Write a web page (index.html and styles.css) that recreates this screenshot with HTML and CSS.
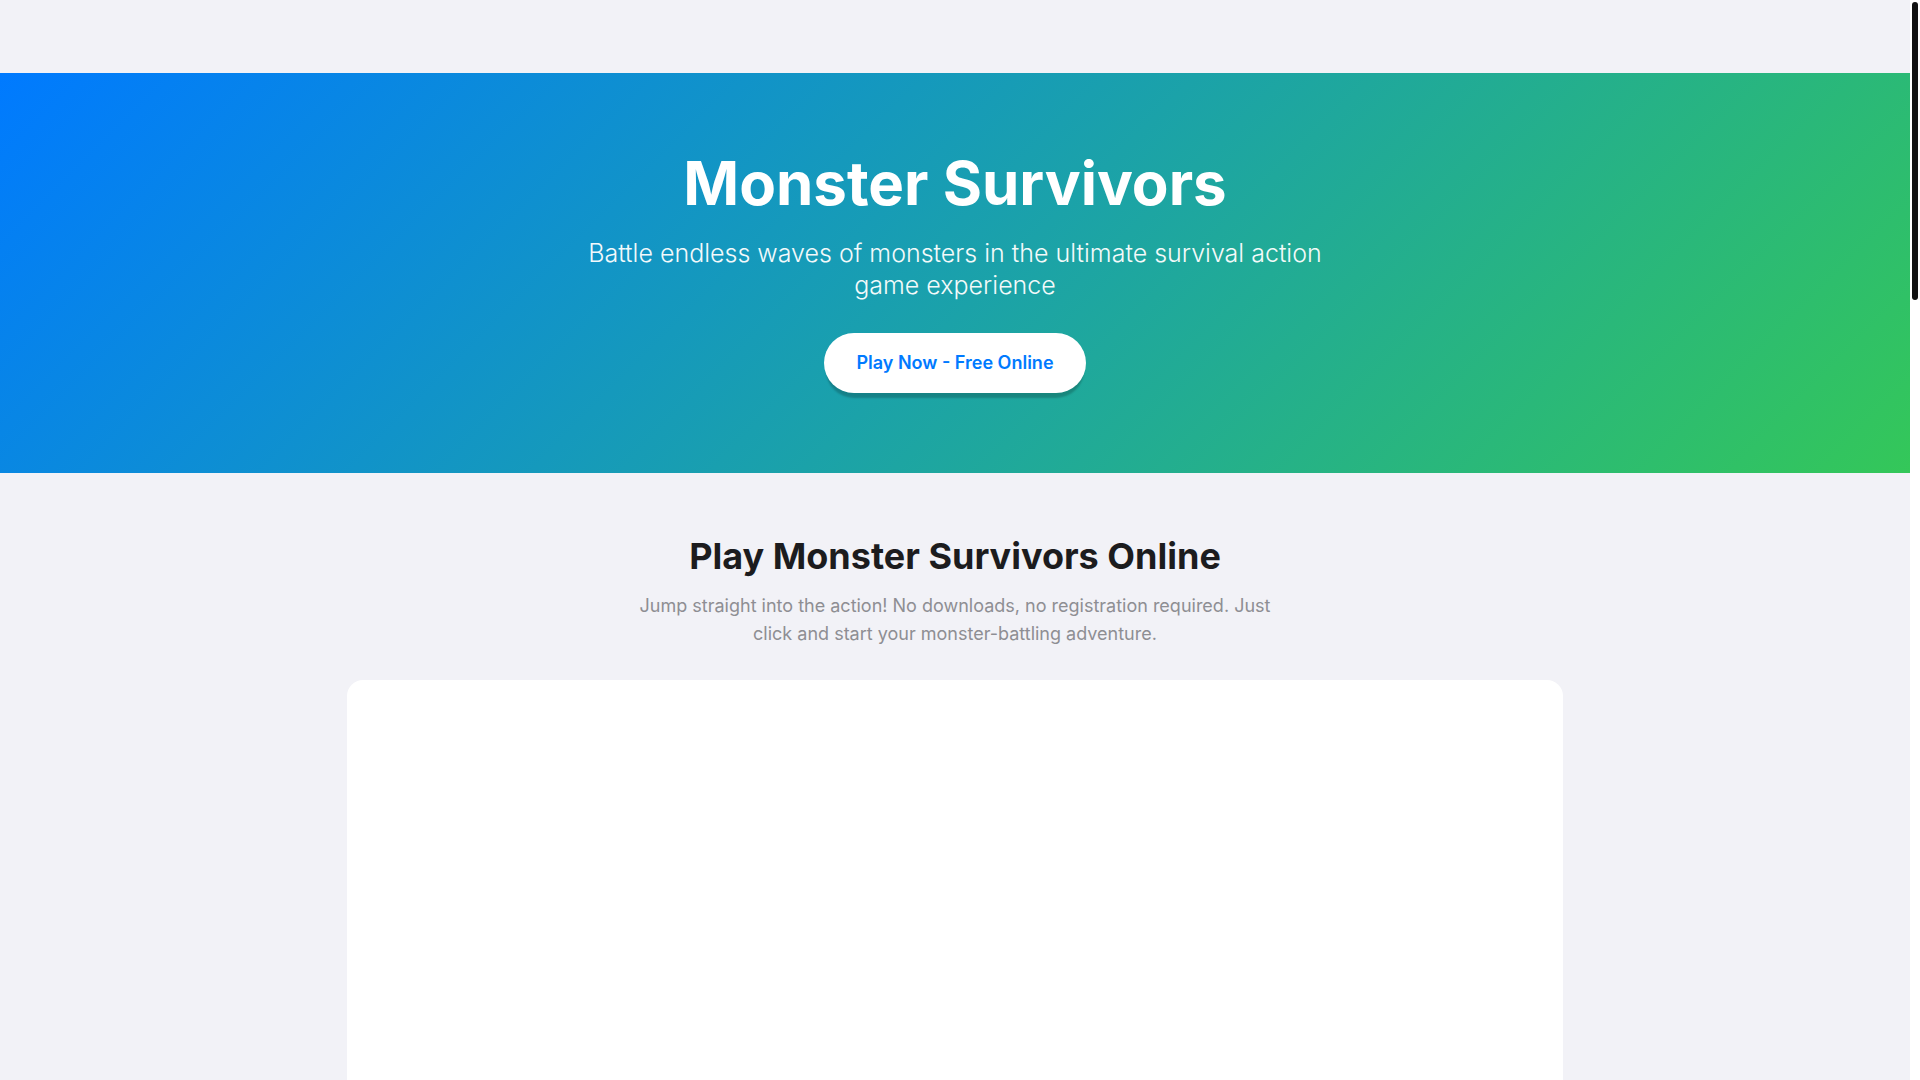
FILE: index.html
```html
<!DOCTYPE html>
<html lang="en">
<head>
<meta charset="utf-8">
<title>Monster Survivors - Play Free Online</title>
<link rel="stylesheet" href="styles.css">
</head>
<body>
<div class="frame">
  <div class="viewport">
    <header class="topbar"></header>
    <section class="hero">
      <h1 class="hero-title">Monster Survivors</h1>
      <p class="hero-sub">Battle endless waves of monsters in the ultimate survival action game experience</p>
      <a class="hero-btn" href="#play">Play Now - Free Online</a>
    </section>
    <main class="play" id="play">
      <h2 class="play-title">Play Monster Survivors Online</h2>
      <p class="play-sub">Jump straight into the action! No downloads, no registration required. Just click and start your monster-battling adventure.</p>
      <div class="game-card"></div>
    </main>
  </div>
  <div class="scrollbar"><div class="scroll-thumb"></div></div>
</div>
</body>
</html>
```

FILE: styles.css
```css
html, body {
  margin: 0;
  padding: 0;
  height: 100%;
  overflow: hidden;
}
body {
  background: #f2f2f7;
  font-family: Inter, "Noto Sans", "Liberation Sans", sans-serif;
  color: #1c1c1e;
}
.frame {
  display: flex;
  height: 100vh;
}
.viewport {
  flex: 1;
  min-width: 0;
  height: 100%;
  overflow: hidden;
  background: #f2f2f7;
}
.scrollbar {
  width: 10px;
  flex: 0 0 10px;
  background: #ffffff;
  display: flex;
  justify-content: flex-end;
  padding-right: 2px;
  box-sizing: border-box;
}
.scroll-thumb {
  width: 6px;
  height: 298px;
  margin-top: 2px;
  background: #111111;
  border-radius: 3px;
}
.topbar {
  height: 73px;
  background: #f2f2f7;
}
.hero {
  background: linear-gradient(135deg, #007aff 0%, #34c759 100%);
  padding: 74px 20px 80px;
  display: flex;
  flex-direction: column;
  align-items: center;
  text-align: center;
  color: #ffffff;
}
.hero-title {
  margin: 0 0 18px;
  font-size: 60px;
  line-height: 1.2;
  font-weight: 700;
  letter-spacing: 0;
}
.hero-sub {
  margin: 0 0 32px;
  max-width: 780px;
  font-size: 25px;
  line-height: 32px;
  font-weight: 300;
  opacity: 0.95;
}
.hero-btn {
  display: inline-block;
  background: #ffffff;
  color: #007aff;
  text-decoration: none;
  font-size: 18px;
  font-weight: 600;
  line-height: 24px;
  padding: 18px 32px;
  border-radius: 30px;
  box-shadow: 0 7px 2px -2px rgba(0, 0, 0, 0.2);
}
.play {
  padding: 62px 20px 60px;
  display: flex;
  flex-direction: column;
  align-items: center;
  text-align: center;
}
.play-title {
  margin: 0 0 14px;
  font-size: 36px;
  line-height: 1.2;
  font-weight: 700;
  color: #1c1c1e;
}
.play-sub {
  margin: 0 0 32px;
  max-width: 660px;
  font-size: 18px;
  line-height: 28px;
  color: #8e8e93;
}
.game-card {
  width: 1216px;
  height: 700px;
  background: #ffffff;
  border-radius: 16px;
}
```
